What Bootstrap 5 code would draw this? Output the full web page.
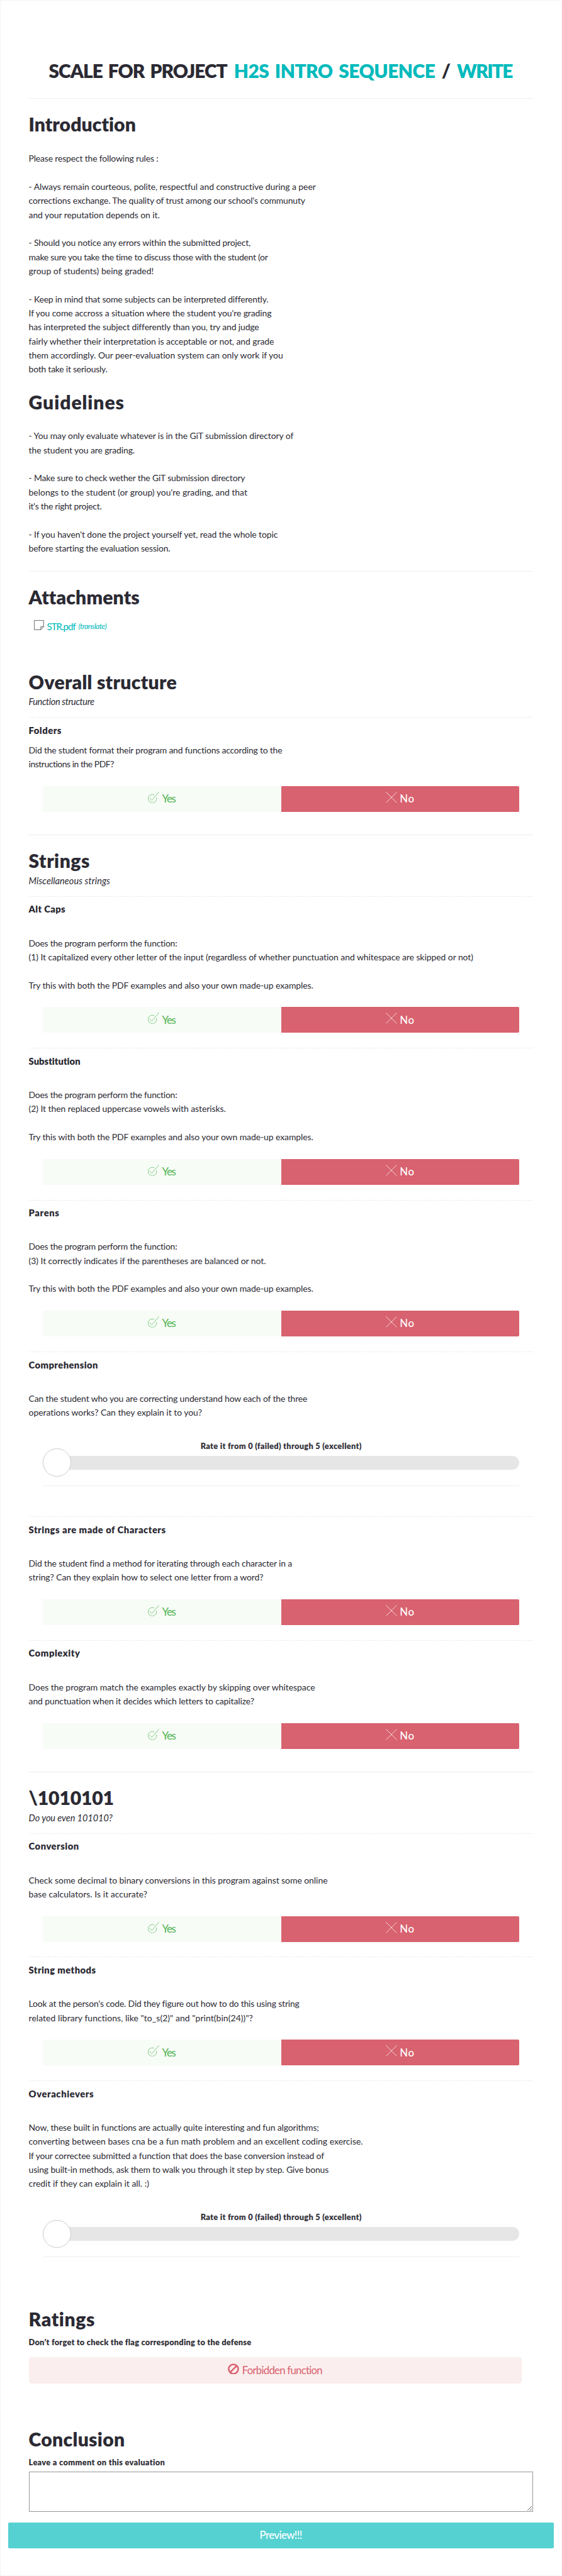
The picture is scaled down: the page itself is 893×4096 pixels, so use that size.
<!DOCTYPE html>
<html lang="en">
<head>
<meta charset="utf-8">
<meta name="viewport" content="width=device-width, initial-scale=1">
<title>Scale for project H2S Intro Sequence / Write</title>
<link href="https://cdn.jsdelivr.net/npm/bootstrap@5.3.0/dist/css/bootstrap.min.css" rel="stylesheet">
<style>
  html { font-size: 5.5834px; }
  body { font: 400 2.5rem/4rem Lato, "Open Sans", sans-serif; color: #2b2a33; background: #f7f7f8; margin: 0; }
  .sheet { height: 4096px; padding: 17rem 7.98rem 0; background: #fff; border: 1px solid #f6f6f7; border-radius: 3px; overflow: hidden; }
  [data-w] { white-space: nowrap; display: inline-block; vertical-align: top; }
  .desc [data-w] { display: block; width: max-content; }
  h1, h2, h3, p, hr, label, textarea { margin: 0; padding: 0; flex: none; }
  h1 { font-size: 5.35rem; line-height: 6rem; font-weight: 800; color: #2b2a33; white-space: nowrap; text-align: center; margin-bottom: 4.7rem; word-spacing: .55rem; }
  h1 b { font-weight: 800; }
  h1 span, .attach { color: #00babc; }
  hr { opacity: 1; border: 0; border-top: 1px solid #eee; height: .2rem; }
  h2 { font-size: 5.4rem; line-height: 6rem; font-weight: 800; color: #2b2a33; }
  h2 b { font-weight: 800; }
  hr + h2 { margin-top: 4.35rem; }
  h3 { font-size: 2.65rem; line-height: 4rem; font-weight: 800; margin-top: 1.55rem; color: #2b2a33; }
  .desc { margin-top: 1.7rem; }
  .desc.spaced { margin-top: 5.7rem; }
  .subtitle { font-style: italic; font-size: 2.6rem; margin-top: .75rem; margin-bottom: 2.2rem; }
  .criterion { border-top: 1px dashed #ebebeb; display: flex; flex-direction: column; padding-top: .02rem; }
  .blank { height: 4rem; }
  .answers { margin: 4.2rem 4.1rem 4.25rem; height: 7.35rem; }
  .answers.final { margin-bottom: 6.5rem; }
  .answers .btn, .flagbox, .preview { font-size: 3rem; line-height: 4rem; border: 0; padding: 0; }
  .answers .btn { border-radius: 0; gap: .8rem; font-weight: 500; }
  .btn-yes { background: #f7fcf7; color: #5cb85c; }
  .btn-no { background: #d8626f; color: #fff; border-radius: 0 2px 2px 0 !important; }
  .answers svg { width: 3.2rem; height: 3.2rem; margin-top: -.9rem; fill: none; stroke: currentColor; stroke-width: 1.3; }
  .rating { margin: 5.4rem 4.1rem 0; border-bottom: 1px solid #eee; height: 13.5rem; }
  .rating label, .note { font-size: 2.3rem; line-height: 4rem; font-weight: 800; color: #33323a; }
  .track { height: 4rem; margin-top: .85rem; border-radius: 2rem; background: #e6e6e6; }
  .knob { width: 8rem; height: 8rem; border-radius: 50%; background: #fff; border: 1px solid #ccc; flex: none; }
  .flagbox { width: 140.4rem; height: 7.4rem; border-radius: .8rem; background: #fbeeee; color: #d8626f; margin-top: 2.4rem; gap: .8rem; }
  .flagbox svg { width: 3.2rem; height: 3.2rem; margin-top: -.9rem; }
  .attach { height: 4rem; margin-top: 3.3rem; margin-left: 1.6rem; font-size: 2.7rem; }
  .attach svg { width: 2.8rem; height: 2.8rem; margin-right: .8rem; margin-top: -.9rem; }
  .attach small { font-size: 2.2rem; font-style: italic; margin-left: .7rem; }
  textarea { height: 11.4rem; border: 1px solid #979797; margin-top: .75rem; border-radius: 0; background: #fff; }
  .preview { margin: 3.05rem -5.9rem 0; height: 7.4rem; flex: none; border-radius: 2px; background: #56d1d2; color: #fff; font-weight: 500; }
</style>
</head>
<body>
<svg width="0" height="0" class="position-absolute" aria-hidden="true">
  <symbol id="i-check" viewBox="0 0 32 32"><path d="M18.300 8.800A12 12 0 1 0 24.300 16.300M4.700 17.500l6.500 7L31.600 .3"/></symbol>
  <symbol id="i-cross" viewBox="0 0 32 32"><path d="M.5 .5l31 31M31.500 .5l-31 31"/></symbol>
</svg>
<main class="sheet d-flex flex-column">
  <h1><b data-w="499">SCALE FOR PROJECT</b> <span data-w="562">H2S INTRO SEQUENCE</span> <b data-w="33">/</b> <span data-w="157">WRITE</span></h1>
  <hr>
  <h2><b data-w="300">Introduction</b></h2>
  <div class="desc" style="margin-top:4.8rem">
    <span data-w="362">Please respect the following rules :</span>
    <div class="blank"></div>
    <span data-w="801">- Always remain courteous, polite, respectful and constructive during a peer</span>
    <span data-w="772">corrections exchange. The quality of trust among our school's communuty</span>
    <span data-w="366">and your reputation depends on it.</span>
    <div class="blank"></div>
    <span data-w="619">- Should you notice any errors within the submitted project,</span>
    <span data-w="668">make sure you take the time to discuss those with the student (or</span>
    <span data-w="349">group of students) being graded!</span>
    <div class="blank"></div>
    <span data-w="668">- Keep in mind that some subjects can be interpreted differently.</span>
    <span data-w="678">If you come accross a situation where the student you're grading</span>
    <span data-w="642">has interpreted the subject differently than you, try and judge</span>
    <span data-w="685">fairly whether their interpretation is acceptable or not, and grade</span>
    <span data-w="710">them accordingly. Our peer-evaluation system can only work if you</span>
    <span data-w="220">both take it seriously.</span>
  </div>
  <h2 style="margin-top:4.3rem"><b data-w="266">Guidelines</b></h2>
  <div class="desc" style="margin-top:4.7rem">
    <span data-w="739">- You may only evaluate whatever is in the GiT submission directory of</span>
    <span data-w="296">the student you are grading.</span>
    <div class="blank"></div>
    <span data-w="604">- Make sure to check wether the GiT submission directory</span>
    <span data-w="610">belongs to the student (or group) you're grading, and that</span>
    <span data-w="204">it's the right project.</span>
    <div class="blank"></div>
    <span data-w="695">- If you haven't done the project yourself yet, read the whole topic</span>
    <span data-w="396">before starting the evaluation session.</span>
  </div>
  <hr style="margin-top:4.4rem">
  <h2><b data-w="307">Attachments</b></h2>
  <div class="attach d-flex align-items-center">
    <svg viewBox="0 0 28 28" fill="none" stroke="#2b2a33" stroke-width="1.3"><path d="M.7 .7H27.300V18.500L19.500 27.300H.7ZM19.500 27.300V18.500H27.300"/></svg>
    <span data-w="81">STR.pdf</span> <small data-w="79">(translate)</small>
  </div>

  <h2 style="margin-top:10.8rem"><b data-w="413">Overall structure</b></h2>
  <p class="subtitle"><span data-w="183">Function structure</span></p>
  <section class="criterion">
    <h3><span data-w="91">Folders</span></h3>
    <div class="desc">
      <span data-w="708">Did the student format their program and functions according to the</span>
      <span data-w="239">instructions in the PDF?</span>
    </div>
    <div class="answers final d-flex">
      <button class="btn btn-yes w-50 d-flex align-items-center justify-content-center"><svg><use href="#i-check"/></svg><span data-w="39">Yes</span></button>
      <button class="btn btn-no w-50 d-flex align-items-center justify-content-center"><svg><use href="#i-cross"/></svg><span data-w="40">No</span></button>
    </div>
  </section>
  <hr>

  <h2><b data-w="170">Strings</b></h2>
  <p class="subtitle"><span data-w="227">Miscellaneous strings</span></p>
  <section class="criterion">
    <h3><span data-w="102">Alt Caps</span></h3>
    <div class="desc spaced">
      <span data-w="415">Does the program perform the function:</span>
      <span data-w="1240">(1) It capitalized every other letter of the input (regardless of whether punctuation and whitespace are skipped or not)</span>
      <div class="blank"></div>
      <span data-w="794">Try this with both the PDF examples and also your own made-up examples.</span>
    </div>
    <div class="answers d-flex">
      <button class="btn btn-yes w-50 d-flex align-items-center justify-content-center"><svg><use href="#i-check"/></svg><span data-w="39">Yes</span></button>
      <button class="btn btn-no w-50 d-flex align-items-center justify-content-center"><svg><use href="#i-cross"/></svg><span data-w="40">No</span></button>
    </div>
  </section>
  <section class="criterion">
    <h3><span data-w="145">Substitution</span></h3>
    <div class="desc spaced">
      <span data-w="415">Does the program perform the function:</span>
      <span data-w="550">(2) It then replaced uppercase vowels with asterisks.</span>
      <div class="blank"></div>
      <span data-w="794">Try this with both the PDF examples and also your own made-up examples.</span>
    </div>
    <div class="answers d-flex">
      <button class="btn btn-yes w-50 d-flex align-items-center justify-content-center"><svg><use href="#i-check"/></svg><span data-w="39">Yes</span></button>
      <button class="btn btn-no w-50 d-flex align-items-center justify-content-center"><svg><use href="#i-cross"/></svg><span data-w="40">No</span></button>
    </div>
  </section>
  <section class="criterion">
    <h3><span data-w="85">Parens</span></h3>
    <div class="desc spaced">
      <span data-w="415">Does the program perform the function:</span>
      <span data-w="662">(3) It correctly indicates if the parentheses are balanced or not.</span>
      <div class="blank"></div>
      <span data-w="794">Try this with both the PDF examples and also your own made-up examples.</span>
    </div>
    <div class="answers d-flex">
      <button class="btn btn-yes w-50 d-flex align-items-center justify-content-center"><svg><use href="#i-check"/></svg><span data-w="39">Yes</span></button>
      <button class="btn btn-no w-50 d-flex align-items-center justify-content-center"><svg><use href="#i-cross"/></svg><span data-w="40">No</span></button>
    </div>
  </section>
  <section class="criterion">
    <h3><span data-w="193">Comprehension</span></h3>
    <div class="desc spaced">
      <span data-w="778">Can the student who you are correcting understand how each of the three</span>
      <span data-w="484">operations works? Can they explain it to you?</span>
    </div>
    <div class="rating d-flex flex-column mb-0">
      <label class="text-center"><span data-w="449">Rate it from 0 (failed) through 5 (excellent)</span></label>
      <div class="track d-flex align-items-center"><div class="knob"></div></div>
    </div>
  </section>
  <section class="criterion" style="margin-top:8.6rem">
    <h3><span data-w="382">Strings are made of Characters</span></h3>
    <div class="desc spaced">
      <span data-w="735">Did the student find a method for iterating through each character in a</span>
      <span data-w="654">string? Can they explain how to select one letter from a word?</span>
    </div>
    <div class="answers d-flex">
      <button class="btn btn-yes w-50 d-flex align-items-center justify-content-center"><svg><use href="#i-check"/></svg><span data-w="39">Yes</span></button>
      <button class="btn btn-no w-50 d-flex align-items-center justify-content-center"><svg><use href="#i-cross"/></svg><span data-w="40">No</span></button>
    </div>
  </section>
  <section class="criterion">
    <h3><span data-w="143">Complexity</span></h3>
    <div class="desc spaced">
      <span data-w="799">Does the program match the examples exactly by skipping over whitespace</span>
      <span data-w="629">and punctuation when it decides which letters to capitalize?</span>
    </div>
    <div class="answers final d-flex">
      <button class="btn btn-yes w-50 d-flex align-items-center justify-content-center"><svg><use href="#i-check"/></svg><span data-w="39">Yes</span></button>
      <button class="btn btn-no w-50 d-flex align-items-center justify-content-center"><svg><use href="#i-cross"/></svg><span data-w="40">No</span></button>
    </div>
  </section>
  <hr>

  <h2><b data-w="238">\1010101</b></h2>
  <p class="subtitle"><span data-w="234">Do you even 101010?</span></p>
  <section class="criterion">
    <h3><span data-w="140">Conversion</span></h3>
    <div class="desc spaced">
      <span data-w="834">Check some decimal to binary conversions in this program against some online</span>
      <span data-w="331">base calculators. Is it accurate?</span>
    </div>
    <div class="answers d-flex">
      <button class="btn btn-yes w-50 d-flex align-items-center justify-content-center"><svg><use href="#i-check"/></svg><span data-w="39">Yes</span></button>
      <button class="btn btn-no w-50 d-flex align-items-center justify-content-center"><svg><use href="#i-cross"/></svg><span data-w="40">No</span></button>
    </div>
  </section>
  <section class="criterion">
    <h3><span data-w="187">String methods</span></h3>
    <div class="desc spaced">
      <span data-w="755">Look at the person's code. Did they figure out how to do this using string</span>
      <span data-w="626">related library functions, like "to_s(2)" and "print(bin(24))"?</span>
    </div>
    <div class="answers d-flex">
      <button class="btn btn-yes w-50 d-flex align-items-center justify-content-center"><svg><use href="#i-check"/></svg><span data-w="39">Yes</span></button>
      <button class="btn btn-no w-50 d-flex align-items-center justify-content-center"><svg><use href="#i-cross"/></svg><span data-w="40">No</span></button>
    </div>
  </section>
  <section class="criterion">
    <h3><span data-w="181">Overachievers</span></h3>
    <div class="desc spaced">
      <span data-w="811">Now, these built in functions are actually quite interesting and fun algorithms;</span>
      <span data-w="933">converting between bases cna be a fun math problem and an excellent coding exercise.</span>
      <span data-w="824">If your correctee submitted a function that does the base conversion instead of</span>
      <span data-w="837">using built-in methods, ask them to walk you through it step by step. Give bonus</span>
      <span data-w="336">credit if they can explain it all. :)</span>
    </div>
    <div class="rating d-flex flex-column">
      <label class="text-center"><span data-w="449">Rate it from 0 (failed) through 5 (excellent)</span></label>
      <div class="track d-flex align-items-center"><div class="knob"></div></div>
    </div>
  </section>

  <h2 style="margin-top:14.7rem"><b data-w="185">Ratings</b></h2>
  <p class="note" style="margin-top:1.4rem"><span data-w="621">Don’t forget to check the flag corresponding to the defense</span></p>
  <div class="flagbox d-flex align-items-center justify-content-center flex-shrink-0">
    <svg viewBox="0 0 32 32" fill="none" stroke="currentColor" stroke-width="4.500"><circle cx="16" cy="16" r="13.500"/><path d="M7 25L25 7"/></svg>
    <span data-w="225">Forbidden function</span>
  </div>

  <h2 style="margin-top:13rem"><b data-w="268">Conclusion</b></h2>
  <label class="note" style="margin-top:1.4rem" for="comment"><span data-w="380">Leave a comment on this evaluation</span></label>
  <textarea id="comment"></textarea>
  <button class="btn preview"><span data-w="119">Preview!!!</span></button>
</main>
<script src="https://cdn.jsdelivr.net/npm/bootstrap@5.3.0/dist/js/bootstrap.bundle.min.js"></script>
<script>
  document.querySelectorAll('[data-w]').forEach(function (el) {
    var target = el.dataset.w * 893 / 1568;
    var n = el.textContent.length;
    if (n < 2) return;
    var gap = (target - el.getBoundingClientRect().width) / (n - 1);
    el.style.letterSpacing = gap.toFixed(3) + 'px';
    el.style.marginRight = (-gap).toFixed(3) + 'px';
  });
</script>
</body>
</html>
